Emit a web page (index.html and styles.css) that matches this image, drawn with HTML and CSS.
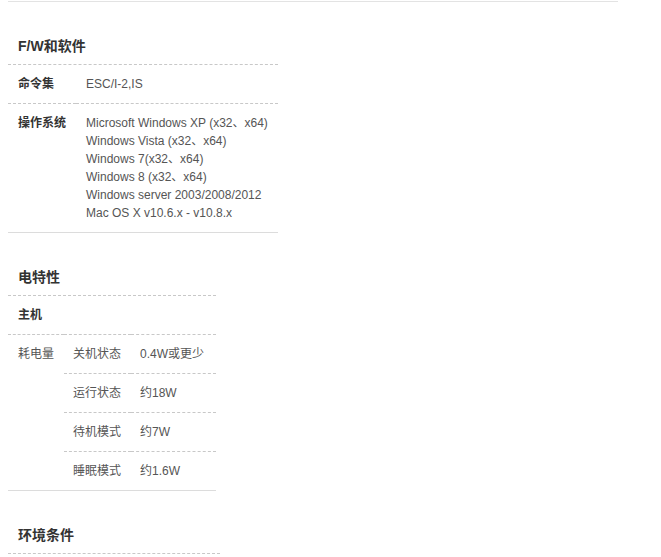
FILE: index.html
```html
<!DOCTYPE html>
<html lang="zh-CN">
  <head>
    <meta charset="UTF-8" />
    <meta name="viewport" content="width=device-width, initial-scale=1.0" />
    <title>规格</title>
    <link rel="stylesheet" href="styles.css">
  </head>
  <body>
    <div class="spec-page">
      <div class="top-rule"></div>

      <!-- F/W和软件 -->
      <div class="spec-section spec-wide">
        <h3 class="spec-title">F/W和软件</h3>
        <table class="spec-table">
          <colgroup>
            <col class="col-label" />
            <col />
          </colgroup>
          <tr>
            <th>命令集</th>
            <td>ESC/I-2,IS</td>
          </tr>
          <tr class="last">
            <th>操作系统</th>
            <td>
              Microsoft Windows XP (x32、x64)<br />
              Windows Vista (x32、x64)<br />
              Windows 7(x32、x64)<br />
              Windows 8 (x32、x64)<br />
              Windows server 2003/2008/2012<br />
              Mac OS X v10.6.x - v10.8.x
            </td>
          </tr>
        </table>
      </div>

      <!-- 电特性 -->
      <div class="spec-section spec-narrow">
        <h3 class="spec-title">电特性</h3>
        <table class="spec-table power-table">
          <colgroup>
            <col class="col-group" />
            <col class="col-sub" />
            <col />
          </colgroup>
          <tr>
            <th colspan="3">主机</th>
          </tr>
          <tr>
            <td class="group-cell" rowspan="4">耗电量</td>
            <td>关机状态</td>
            <td>0.4W或更少</td>
          </tr>
          <tr>
            <td>运行状态</td>
            <td>约18W</td>
          </tr>
          <tr>
            <td>待机模式</td>
            <td>约7W</td>
          </tr>
          <tr class="last">
            <td>睡眠模式</td>
            <td>约1.6W</td>
          </tr>
        </table>
      </div>

      <!-- 环境条件 -->
      <div class="spec-section spec-env">
        <h3 class="spec-title">环境条件</h3>
      </div>
    </div>
  </body>
</html>
```

FILE: styles.css
```css
* {
  box-sizing: border-box;
}

body {
  margin: 0 8px;
  font-family: "Liberation Sans", "Noto Sans CJK SC", sans-serif;
  font-size: 12px;
  line-height: 18px;
  color: #555;
  background-color: #fff;
}

.spec-page {
  width: 610px;
}

.top-rule {
  margin-top: 1px;
  border-top: 1px solid #e3e3e3;
}

.spec-section {
  margin-top: 35px;
}

.spec-wide {
  width: 270px;
}

.spec-narrow {
  width: 208px;
}

.spec-env {
  width: 212px;
}

.spec-title {
  margin: 0;
  padding: 0 10px 9px;
  font-size: 14px;
  font-weight: bold;
  line-height: 18px;
  color: #333;
  border-bottom: 1px dashed #c8c8c8;
}

.spec-table {
  width: 100%;
  border-collapse: collapse;
  table-layout: fixed;
}

.spec-table th,
.spec-table td {
  padding: 10px 0 10px 10px;
  text-align: left;
  vertical-align: top;
  border-bottom: 1px dashed #c8c8c8;
}

.spec-table th {
  font-weight: bold;
  color: #333;
}

.spec-table .last th,
.spec-table .last td,
.spec-table .group-cell {
  border-bottom: 1px solid #dcdcdc;
}

.col-label {
  width: 68px;
}

.col-group {
  width: 56px;
}

.col-sub {
  width: 67px;
}

.power-table td {
  padding-left: 9px;
}

.power-table td.group-cell {
  padding-left: 10px;
}
```
